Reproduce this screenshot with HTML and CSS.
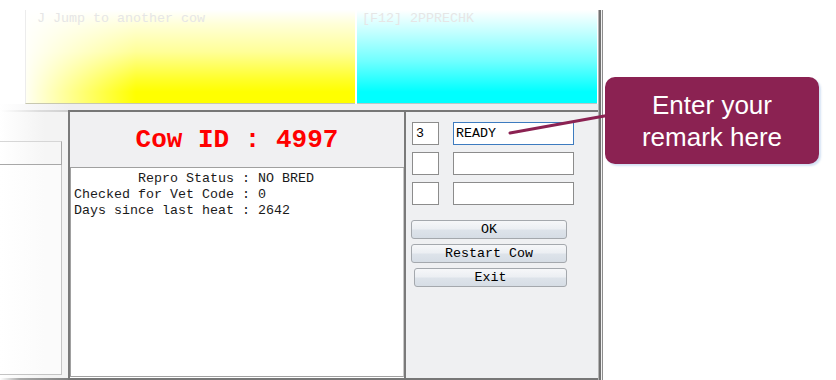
FILE: index.html
```html
<!DOCTYPE html>
<html>
  <head>
    <meta charset="utf-8">
    <title>Cow remark</title>
    <link rel="stylesheet" href="styles.css">
  </head>
  <body>
    <div class="screen">
      <div class="window">
        <div class="top">
          <div class="pane yellow">J Jump to another cow</div>
          <div class="pane cyan">[F12] 2PPRECHK</div>
        </div>
        <div class="band"></div>
        <div class="rule"></div>
        <div class="main">
          <div class="side">
            <div class="side-top"></div>
            <div class="side-tab"></div>
            <div class="side-body"></div>
          </div>
          <div class="center">
            <div class="cow-id">Cow ID : 4997</div>
            <div class="notes">        Repro Status : NO BRED
Checked for Vet Code : 0
Days since last heat : 2642</div>
          </div>
          <div class="controls">
            <div class="field-row">
              <div class="code">3</div>
              <div class="remark focus">READY</div>
            </div>
            <div class="field-row">
              <div class="code"></div>
              <div class="remark"></div>
            </div>
            <div class="field-row">
              <div class="code"></div>
              <div class="remark"></div>
            </div>
            <div class="buttons">
              <div class="btn">OK</div>
              <div class="btn">Restart Cow</div>
              <div class="btn exit">Exit</div>
            </div>
          </div>
        </div>
        <div class="rule bottom"></div>
      </div>
      <div class="frame-edge"></div>
    </div>

    <svg class="pointer" width="836" height="380" viewBox="0 0 836 380">
      <line x1="510" y1="133" x2="610" y2="115" stroke="#8b2252" stroke-width="3" stroke-linecap="round"/>
    </svg>
    <div class="callout">Enter your<br>remark here</div>
  </body>
</html>
```

FILE: styles.css
```css
body {
  margin: 0;
  background: #ffffff;
  font-family: "Courier New", "Liberation Mono", monospace;
  font-size: 13.33px;
  line-height: 16px;
  color: #1a1a1a;
  width: 836px;
  height: 380px;
  overflow: hidden;
  position: relative;
}
.screen {
  display: flex;
  width: 603px;
  height: 380px;
}
.window {
  width: 598px;
  display: flex;
  flex-direction: column;
}

/* top coloured panes */
.top {
  height: 104px;
  box-sizing: border-box;
  padding: 10px 1px 0 25px;
  display: flex;
  gap: 2px;
}
.pane {
  box-sizing: border-box;
  height: 94px;
  padding-top: 1px;
  color: #e6e6e6;
  white-space: pre;
}
.yellow {
  width: 330px;
  padding-left: 11px;
  border-left: 1px solid #ececec;
  border-bottom: 1px solid #c8c8b0;
  background:
    linear-gradient(to right, rgba(255,255,255,0.95) 0, rgba(255,255,255,0.6) 40px, rgba(255,255,255,0) 110px),
    linear-gradient(to bottom, #ffffff 0, #ffffd8 15%, #ffff98 45%, #ffff28 75%, #ffff00 88%);
}
.cyan {
  flex: 1;
  padding-left: 5px;
  border-bottom: 1px solid #b8c8c8;
  background: linear-gradient(to bottom, #ffffff 0, #c0ffff 25%, #70ffff 55%, #00ffff 88%);
}
.band {
  height: 6px;
  background: linear-gradient(to right, #ffffff 0, #eeeef0 70px);
}
.rule {
  height: 2px;
  background: linear-gradient(to right, #ffffff 0, #dcdcdc 40px, #d0d0d0 68px, #777777 68px);
}
.rule.bottom {
  background: linear-gradient(to right, #ffffff 0, #a8a8a8 20px, #808080 68px, #777777 68px);
}

/* main row */
.main {
  height: 266px;
  display: flex;
}
.side {
  width: 68px;
  box-sizing: border-box;
  padding: 0 6px 3px 0;
  display: flex;
  flex-direction: column;
  background: linear-gradient(to right, #ffffff 0, #f3f3f3 45px);
}
.side-top {
  height: 29px;
}
.side-tab {
  height: 24px;
  box-sizing: border-box;
  border-top: 1px solid #d6d6d6;
  border-bottom: 1px solid #a8a8a8;
  border-right: 1px solid #a8a8a8;
  background: linear-gradient(to right, #ffffff 0, #f6f6f6 45px);
}
.side-body {
  flex: 1;
  border-right: 1px solid #c4c4c4;
  border-bottom: 1px solid #c4c4c4;
  background: linear-gradient(to right, #ffffff 0, #fbfbfb 45px);
}

.center {
  width: 338px;
  box-sizing: border-box;
  border-left: 2px solid #7a7a7a;
  border-right: 2px solid #7a7a7a;
  display: flex;
  flex-direction: column;
}
.cow-id {
  height: 56px;
  box-sizing: border-box;
  border-bottom: 1px solid #a0a0a0;
  background: #f0f0f2;
  color: #ff0000;
  font-weight: bold;
  font-size: 26px;
  display: flex;
  align-items: center;
  justify-content: center;
  white-space: pre;
}
.notes {
  flex: 1;
  background: #ffffff;
  border-left: 1px solid #a0a0a0;
  border-right: 1px solid #c8c8c8;
  border-bottom: 1px solid #a0a0a0;
  margin-bottom: 1px;
  padding: 3px 3px;
  white-space: pre;
}

.controls {
  flex: 1;
  background: #eff0f2;
  padding: 10px 0 0 6px;
}
.field-row {
  display: flex;
  gap: 14px;
  margin-bottom: 7px;
}
.code, .remark {
  height: 23px;
  box-sizing: border-box;
  background: #ffffff;
  border: 1px solid #8c8c8c;
  line-height: 21px;
  color: #000000;
}
.code {
  width: 27px;
  padding-left: 3px;
}
.remark {
  width: 121px;
  padding-left: 2px;
}
.remark.focus {
  border-color: #3d7bbf;
}
.buttons {
  margin: 15px 0 0 -1px;
  display: flex;
  flex-direction: column;
  gap: 5px;
}
.btn {
  width: 156px;
  height: 19px;
  box-sizing: border-box;
  border: 1px solid #a4a8ad;
  border-radius: 3px;
  background: linear-gradient(to bottom, #f6f7f9 0, #eceff3 45%, #dde3ea 55%, #d6dde5 100%);
  text-align: center;
  line-height: 17px;
  color: #000000;
}
.btn.exit {
  width: 153px;
  margin-left: 3px;
}

.frame-edge {
  width: 5px;
  margin-top: 10px;
  background: linear-gradient(to right, #b4b4b4 0, #b4b4b4 1px, #727272 1px, #727272 3px, #f2f2f2 3px, #f2f2f2 4px, #8e8e8e 4px);
}

/* annotation */
.pointer {
  position: absolute;
  left: 0;
  top: 0;
}
.callout {
  position: absolute;
  left: 605px;
  top: 77px;
  width: 214px;
  height: 87px;
  border-radius: 10px;
  background: #8b2252;
  box-shadow: 2px 2px 2px rgba(160, 190, 230, 0.45);
  color: #ffffff;
  font-family: "Liberation Sans", Arial, sans-serif;
  font-size: 26px;
  line-height: 32px;
  text-align: center;
  display: flex;
  align-items: center;
  justify-content: center;
}
```
